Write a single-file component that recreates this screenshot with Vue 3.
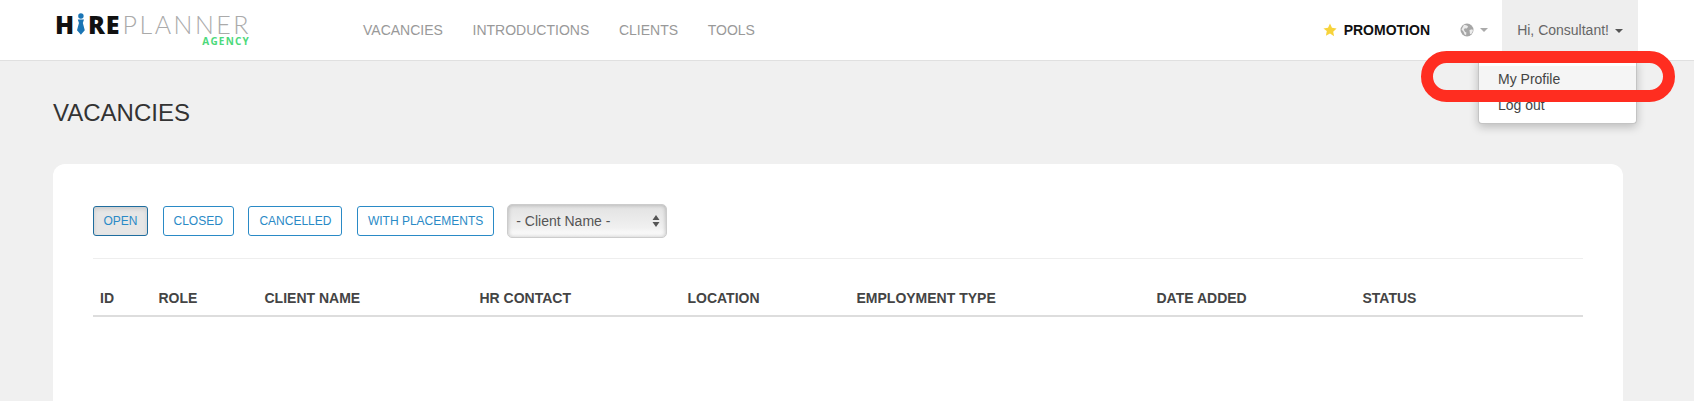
<template>
  <div class="page">
    <header class="topbar">
      <div class="logo">
        <div class="logo-main">
          <span class="hi">H</span>
          <svg class="tie" width="8" height="22" viewBox="0 0 8 22">
            <circle cx="4" cy="2.800" r="2.800" fill="#1b75b5" />
            <path d="M.8 6.500h6.400L6 10l2 7.500L4 22 0 17.500 2 10z" fill="#1b75b5" />
          </svg>
          <span class="hi re">RE</span>
          <span class="planner">PLANNER</span>
        </div>
        <div class="agency">AGENCY</div>
      </div>
      <nav class="nav">
        <a v-for="item in navItems" :key="item">{{ item }}</a>
      </nav>
      <div class="right">
        <a class="promo">
          <svg width="14" height="14" viewBox="0 0 24 24"><path d="M12 1l3.400 7.300 7.900 1-5.800 5.500 1.500 7.900L12 17.900 5 21.700l1.500-7.900L.7 9.300l7.900-1z" fill="#f7d33b" /></svg>
          PROMOTION
        </a>
        <a class="lang">
          <svg width="14" height="14" viewBox="0 0 14 14">
            <circle cx="7" cy="7" r="6.500" fill="#a6a6a6" />
            <path d="M4 1.800l3 .6 1.200 1.400-1.500 1.700-1.900-.2-1 1.500 1.400 2.200 1.200.5-.3 2.800-1.500-.7-1.200-3L1.500 6.500zM9.500 7l2.700-.8.800 1.500-1.500 3-1.500.5z" fill="#ececec" />
          </svg>
          <i class="caret light"></i>
        </a>
        <a class="user">Hi, Consultant! <i class="caret"></i></a>
      </div>
      <ul class="menu">
        <li class="hover">My Profile</li>
        <li>Log out</li>
      </ul>
      <div class="highlight"></div>
    </header>

    <main class="content">
      <h1>VACANCIES</h1>
      <section class="card">
        <div class="filters">
          <button
            v-for="f in filters"
            :key="f"
            class="btn"
            :class="{ active: f === 'OPEN' }"
          >{{ f }}</button>
          <div class="select">
            <span>- Client Name -</span>
            <svg width="8" height="12" viewBox="0 0 8 12">
              <path d="M4 0l3.500 5H.5zM4 12L.5 7h7z" fill="#555" />
            </svg>
          </div>
        </div>
        <div class="table-head">
          <div v-for="c in columns" :key="c">{{ c }}</div>
        </div>
      </section>
    </main>
  </div>
</template>

<script setup>
const navItems = ['VACANCIES', 'INTRODUCTIONS', 'CLIENTS', 'TOOLS']
const filters = ['OPEN', 'CLOSED', 'CANCELLED', 'WITH PLACEMENTS']
const columns = ['ID', 'ROLE', 'CLIENT NAME', 'HR CONTACT', 'LOCATION', 'EMPLOYMENT TYPE', 'DATE ADDED', 'STATUS']
</script>

<style>
html, body {
  margin: 0;
  background: #f0f0f0;
  overflow: hidden;
}
</style>

<style scoped>
.page {
  width: 1694px;
  height: 401px;
  overflow: hidden;
  background: #f0f0f0;
  font-family: "Liberation Sans", Arial, sans-serif;
  color: #333;
}
.topbar {
  position: relative;
  height: 60px;
  background: #fff;
  border-bottom: 1px solid #e0e0e0;
  display: flex;
  align-items: flex-start;
}
.logo {
  width: 308px;
  padding: 14px 0 0 55px;
  flex: none;
}
.logo-main {
  display: flex;
  align-items: center;
  height: 20px;
  width: 196px;
  white-space: nowrap;
  font-family: "Open Sans", sans-serif;
  font-size: 25px;
  line-height: 20px;
}
.hi {
  font-weight: 800;
  color: #111;
}
.re {
  letter-spacing: 1px;
}
.tie {
  margin: 0 3px 0 3px;
}
.planner {
  font-family: Lato, sans-serif;
  font-weight: 300;
  color: #aaa;
  margin-left: 2px;
  letter-spacing: 2.500px;
}
.agency {
  width: 195px;
  text-align: right;
  font-family: "Open Sans", sans-serif;
  font-size: 10px;
  line-height: 10px;
  margin-top: 2px;
  font-weight: 700;
  letter-spacing: 1.200px;
  color: #4cd97b;
}
.nav {
  display: flex;
  gap: 29.700px;
  font-size: 14px;
  line-height: 60px;
  color: #999;
}
.right {
  margin-left: auto;
  margin-right: 56px;
  display: flex;
  align-items: center;
  height: 60px;
  font-size: 14px;
}
.promo {
  font-weight: 700;
  color: #111;
  display: flex;
  align-items: center;
  gap: 7px;
  margin-right: 30px;
}
.lang {
  display: flex;
  align-items: center;
  gap: 6px;
  margin-right: 14px;
}
.user {
  background: #eee;
  height: 60px;
  line-height: 60px;
  width: 136px;
  text-align: center;
  color: #666;
}
.caret {
  display: inline-block;
  vertical-align: middle;
  margin-left: 2px;
  border-top: 4px solid #555;
  border-left: 4px solid transparent;
  border-right: 4px solid transparent;
}
.caret.light {
  border-top-color: #aaa;
  margin-left: 0;
}
.menu {
  position: absolute;
  top: 60px;
  left: 1478px;
  width: 159px;
  height: 64px;
  margin: 0;
  padding: 6px 0 0;
  box-sizing: border-box;
  list-style: none;
  background: #fff;
  border: 1px solid #c4c4c4;
  border-top: 0;
  border-radius: 0 0 4px 4px;
  box-shadow: 0 3px 10px rgba(0, 0, 0, 0.22);
  font-size: 14px;
  color: #444;
}
.menu li {
  height: 26px;
  line-height: 26px;
  padding-left: 19px;
}
.menu li.hover {
  background: #f5f5f5;
}
.highlight {
  position: absolute;
  left: 1421px;
  top: 51px;
  width: 254px;
  height: 51px;
  box-sizing: border-box;
  border: 12px solid #ff2d20;
  border-radius: 26px;
}
.content {
  padding: 0 71px 0 53px;
}
h1 {
  margin: 0;
  padding-top: 38px;
  height: 65px;
  font-size: 24px;
  line-height: 28px;
  font-weight: 400;
  color: #333;
}
.card {
  background: #fff;
  border-radius: 12px;
  padding: 40px;
  height: 400px;
}
.filters {
  display: flex;
  align-items: center;
  gap: 14.500px;
  padding-bottom: 20px;
  border-bottom: 1px solid #eee;
}
.btn {
  height: 30px;
  padding: 0 10px;
  background: #fff;
  border: 1px solid #2a8ac6;
  border-radius: 3px;
  color: #2a8ac6;
  font-family: inherit;
  font-size: 12px;
}
.btn.active {
  padding: 0 9.500px;
  background: #e6e6e6;
  border-color: #1f6d9e;
  box-shadow: inset 0 2px 4px rgba(0, 0, 0, 0.12);
}
.select {
  width: 160px;
  height: 34px;
  margin-left: -1.500px;
  box-sizing: border-box;
  display: flex;
  align-items: center;
  justify-content: space-between;
  padding: 0 6px 0 8px;
  border: 1px solid #ccc;
  border-radius: 5px;
  background: linear-gradient(#e2e2e2, #f0f0f0 70%, #fff);
  box-shadow: inset 0 0 4px rgba(0, 0, 0, 0.25);
  font-size: 14px;
  color: #555;
}
.table-head {
  display: grid;
  grid-template-columns: 58.500px 106px 215px 208px 169px 300px 206px 227px;
  height: 56px;
  border-bottom: 2px solid #ddd;
  font-size: 14px;
  font-weight: 700;
  line-height: 79px;
  color: #444;
}
.table-head div {
  padding-left: 7px;
}
</style>
